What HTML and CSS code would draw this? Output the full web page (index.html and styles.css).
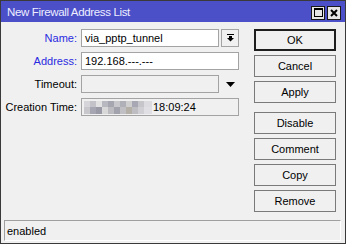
FILE: index.html
```html
<!DOCTYPE html>
<html>
<head>
<meta charset="utf-8">
<link rel="stylesheet" href="styles.css">
</head>
<body>
<div class="window">
  <div class="titlebar">
    <span class="title">New Firewall Address List</span>
    <div class="tb-buttons">
      <span class="tb-btn"><svg width="9" height="9" viewBox="0 0 9 9"><rect x="0.5" y="0.5" width="8" height="8" fill="none" stroke="#000" stroke-width="1"/><rect x="0" y="0" width="9" height="2" fill="#000"/></svg></span>
      <span class="tb-btn"><svg width="8" height="8" viewBox="0 0 8 8"><path d="M1 1 L7 7 M7 1 L1 7" stroke="#000" stroke-width="2"/></svg></span>
    </div>
  </div>
  <div class="content">
    <div class="form">
      <div class="row">
        <span class="lbl blue">Name:</span>
        <div class="field">
          <div class="input white">via_pptp_tunnel</div>
          <div class="dd-btn"><svg width="7" height="8" viewBox="0 0 7 8"><rect x="0" y="0" width="7" height="1" fill="#000"/><rect x="2" y="2" width="3" height="2" fill="#000"/><polygon points="0,4 7,4 3.5,7.5" fill="#000"/></svg></div>
        </div>
      </div>
      <div class="row">
        <span class="lbl blue">Address:</span>
        <div class="field">
          <div class="input white">192.168.---.---</div>
        </div>
      </div>
      <div class="row">
        <span class="lbl">Timeout:</span>
        <div class="field">
          <div class="input"></div>
          <div class="dd-plain"><svg width="9" height="5" viewBox="0 0 9 5"><polygon points="0,0 9,0 4.5,5" fill="#000"/></svg></div>
        </div>
      </div>
      <div class="row">
        <span class="lbl">Creation Time:</span>
        <div class="field">
          <div class="input"><span class="mosaic"></span>18:09:24</div>
        </div>
      </div>
    </div>
    <div class="buttons">
      <div class="btn default">OK</div>
      <div class="btn">Cancel</div>
      <div class="btn">Apply</div>
      <div class="btn sep">Disable</div>
      <div class="btn">Comment</div>
      <div class="btn">Copy</div>
      <div class="btn">Remove</div>
    </div>
  </div>
  <div class="status">enabled</div>
</div>
</body>
</html>
```
FILE: styles.css
```css
html, body {
  margin: 0;
  padding: 0;
  background: #f0f0f0;
}
.window {
  width: 346px;
  height: 244px;
  box-sizing: border-box;
  border: 1px solid #3a3a3a;
  background: #f0f0f0;
  display: flex;
  flex-direction: column;
  font-family: "Liberation Sans", Arial, sans-serif;
  font-size: 11px;
  color: #000;
}
.titlebar {
  height: 21px;
  background: #4b4fc8;
  display: flex;
  align-items: center;
  justify-content: space-between;
  padding: 0 4px 0 6px;
  flex: none;
}
.title {
  color: #eeeeff;
  font-size: 11.5px;
  letter-spacing: -0.35px;
}
.tb-buttons {
  display: flex;
  gap: 2px;
  margin-top: 2px;
}
.tb-btn {
  width: 14px;
  height: 14px;
  box-sizing: border-box;
  border: 1px solid #1a1a1a;
  background: #e6e6e6;
  display: flex;
  align-items: center;
  justify-content: center;
}
.content {
  flex: 1;
  display: flex;
  padding: 7px 9px 0 4px;
  gap: 15px;
}
.form {
  display: flex;
  flex-direction: column;
  gap: 5px;
}
.row {
  display: flex;
  align-items: center;
  gap: 4px;
  height: 18px;
}
.lbl {
  width: 72px;
  text-align: right;
  white-space: nowrap;
}
.lbl.blue {
  color: #2a2ae0;
}
.field {
  width: 158px;
  display: flex;
  gap: 2px;
  height: 18px;
}
.input {
  flex: 1;
  box-sizing: border-box;
  border: 1px solid #a3a3a3;
  background: #f0f0f0;
  height: 18px;
  line-height: 16px;
  padding-left: 3px;
  display: flex;
  align-items: center;
  white-space: nowrap;
}
.input.white {
  background: #fff;
}
.dd-btn {
  width: 18px;
  box-sizing: border-box;
  border: 1px solid #a3a3a3;
  background: #f0f0f0;
  display: flex;
  align-items: center;
  justify-content: center;
}
.dd-plain {
  width: 18px;
  display: flex;
  align-items: center;
  justify-content: center;
}
.mosaic {
  display: inline-block;
  width: 68px;
  height: 13px;
  margin-right: 1px;
  margin-left: -1px;
  background:
    linear-gradient(90deg, #d6d6da 0 6px, #c2c2c8 6px 12px, #e2e2e2 12px 18px, #b8b8c0 18px 24px, #a6a6b0 24px 30px, #c8c8cc 30px 36px, #b0b0b8 36px 42px, #cfcfcf 42px 48px, #a8a8b4 48px 54px, #c6c6ca 54px 60px, #dcdce0 60px 68px) top / 68px 6px no-repeat,
    linear-gradient(90deg, #c8c8cc 0 6px, #a6a6b2 6px 12px, #9a9aa6 12px 18px, #d8d8d8 18px 24px, #bcbcc0 24px 30px, #a2a2ac 30px 36px, #c0c0c4 36px 42px, #b4b0a8 42px 48px, #bdbdc2 48px 54px, #d0d0d4 54px 60px, #e0e0e4 60px 68px) bottom / 68px 7px no-repeat;
}
.buttons {
  width: 82px;
  display: flex;
  flex-direction: column;
  gap: 4px;
}
.btn {
  height: 22px;
  box-sizing: border-box;
  border: 1px solid #7a7a7a;
  background: #f0f0f0;
  display: flex;
  align-items: center;
  justify-content: center;
}
.btn.default {
  border: 2px solid #1e1e1e;
}
.btn.sep {
  margin-top: 5px;
}
.status {
  flex: none;
  height: 21px;
  box-sizing: border-box;
  margin: 0 4px 2px 3px;
  border-top: 1px solid #a0a0a0;
  border-left: 1px solid #a0a0a0;
  border-right: 1px solid #fff;
  border-bottom: 1px solid #fff;
  padding-left: 2px;
  display: flex;
  align-items: center;
}
```
